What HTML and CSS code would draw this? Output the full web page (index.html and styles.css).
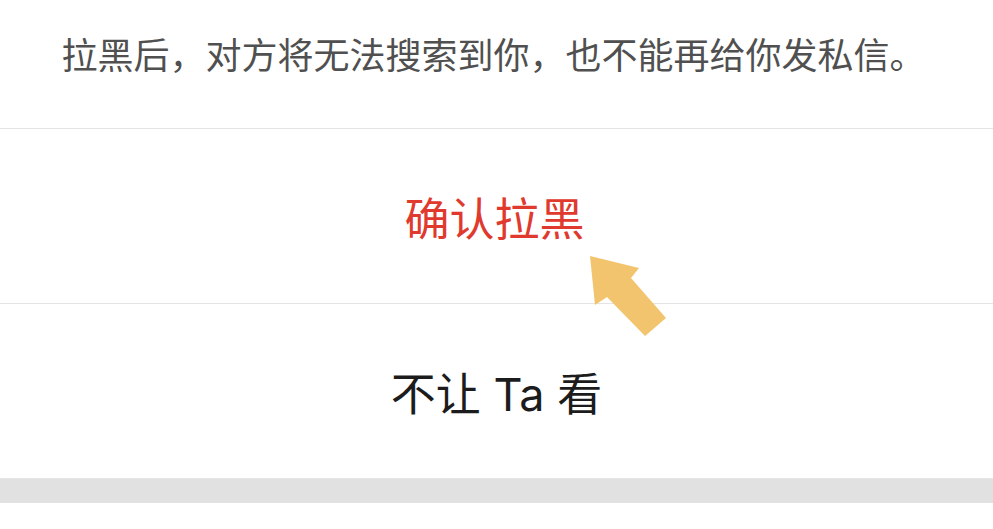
FILE: index.html
```html
<!DOCTYPE html>
<html lang="zh-CN">
<head>
<meta charset="utf-8">
<title>拉黑</title>
<link rel="stylesheet" href="styles.css">
</head>
<body>
<div class="sheet">
  <div class="row row-tip">拉黑后，对方将无法搜索到你，也不能再给你发私信。</div>
  <div class="row row-action row-danger">确认拉黑</div>
  <div class="row row-action">不让 Ta 看</div>
  <div class="gap"></div>
  <div class="rest"></div>
  <svg class="arrow" width="993" height="529" viewBox="0 0 993 529">
    <polygon points="590,256 639,268 631,278 666,318 645,336 607,297 595,305" fill="#f2c46d"/>
  </svg>
</div>
</body>
</html>
```
FILE: styles.css
```css
html, body {
  margin: 0;
  padding: 0;
  background: #ffffff;
}
body {
  font-family: "Noto Sans CJK SC", "Noto Sans", sans-serif;
  width: 993px;
  height: 529px;
  overflow: hidden;
}
.sheet {
  position: relative;
  display: flex;
  flex-direction: column;
  width: 993px;
  height: 529px;
}
.row {
  display: flex;
  align-items: center;
  justify-content: center;
  box-sizing: border-box;
  border-bottom: 1px solid #e4e4e4;
  white-space: nowrap;
}
.row-tip {
  height: 129px;
  padding-bottom: 22px;
  padding-right: 6px;
  font-size: 36px;
  color: #505050;
}
.row-action {
  height: 175px;
  font-family: "Inter", "Noto Sans CJK SC", sans-serif;
  font-size: 45px;
  color: #1c1c1c;
}
.row-danger {
  color: #e0392e;
  padding-right: 4px;
}
.row-action:last-of-type {
  border-bottom: none;
  padding-top: 4px;
}
.gap {
  height: 24px;
  background: #e1e1e1;
}
.rest {
  flex: 1;
  background: #ffffff;
}
.arrow {
  position: absolute;
  left: 0;
  top: 0;
  pointer-events: none;
}
```
